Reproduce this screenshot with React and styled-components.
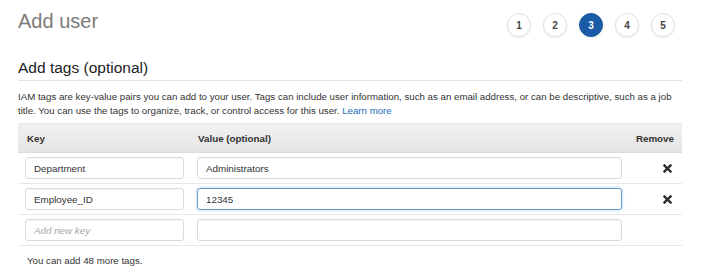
import React from 'react';
import styled, { createGlobalStyle } from 'styled-components';

const STEPS = [1, 2, 3, 4, 5];

const TAGS = [
  { key: 'Department', value: 'Administrators' },
  { key: 'Employee_ID', value: '12345', focused: true },
];

const GlobalStyle = createGlobalStyle`
  html, body {
    margin: 0;
    padding: 0;
    background: #fff;
  }
  body {
    font-family: 'Liberation Sans', Arial, sans-serif;
    color: #333;
  }
`;

const Page = styled.div`
  width: 664px;
  padding: 0 21px 0 18px;
`;

const TopBar = styled.div`
  display: flex;
  justify-content: space-between;
  align-items: flex-start;
  height: 46px;
`;

const Title = styled.h1`
  margin: 0;
  padding-top: 8px;
  font-size: 20px;
  line-height: 26px;
  font-weight: normal;
  color: #7b7b7b;
`;

const Steps = styled.div`
  display: flex;
  gap: 12px;
  margin: 13px 7px 0 0;
`;

const Step = styled.div`
  width: 24px;
  height: 24px;
  box-sizing: border-box;
  border-radius: 50%;
  display: flex;
  align-items: center;
  justify-content: center;
  font-size: 10px;
  font-weight: bold;
  color: ${(p) => (p.active ? '#fff' : '#444')};
  background: ${(p) => (p.active ? '#1a5aa6' : '#fff')};
  border: 1px solid ${(p) => (p.active ? '#1a5aa6' : '#e2e2e2')};
  box-shadow: 0 1px 2px rgba(0, 0, 0, 0.08);
`;

const SectionTitle = styled.h2`
  margin: 12px 0 0;
  padding-bottom: 2px;
  font-size: 15.5px;
  line-height: 20px;
  font-weight: normal;
  color: #222;
  border-bottom: 1px solid #e4e4e4;
`;

const Intro = styled.p`
  margin: 9px 0 0;
  font-size: 9.7px;
  line-height: 14px;
  color: #333;
`;

const Link = styled.a`
  color: #1a6bb8;
  text-decoration: none;
`;

const Table = styled.div`
  margin-top: 5px;
  display: grid;
  grid-template-columns: 179px 425px 60px;
`;

const HeadCell = styled.div`
  box-sizing: border-box;
  height: 30px;
  display: flex;
  align-items: center;
  justify-content: ${(p) => (p.right ? 'flex-end' : 'flex-start')};
  padding: ${(p) => (p.first ? '0 0 0 9px' : p.right ? '0 8px 0 0' : '0 0 0 1px')};
  font-size: 9.8px;
  font-weight: bold;
  color: #333;
  background: linear-gradient(#f1f1f1, #e5e5e5);
  border-top: 1px solid #e9e9e9;
  border-bottom: 1px solid #dcdcdc;
`;

const Cell = styled.div`
  height: 30px;
  display: flex;
  align-items: center;
  justify-content: ${(p) => (p.right ? 'flex-end' : 'flex-start')};
  padding: ${(p) => (p.first ? '0 0 0 7px' : p.right ? '0 10px 0 0' : '0')};
  border-bottom: 1px solid #e8e8e8;
`;

const Input = styled.input`
  box-sizing: border-box;
  width: ${(p) => p.w}px;
  height: 22px;
  padding: 0 8px;
  font-family: 'Liberation Sans', Arial, sans-serif;
  font-size: 9.8px;
  color: #333;
  background: #fff;
  border: 1px solid ${(p) => (p.focused ? '#6a9fd4' : '#dadada')};
  border-radius: 3px;
  box-shadow: ${(p) =>
    p.focused
      ? '0 0 3px rgba(60, 130, 200, 0.45)'
      : 'inset 0 1px 1px rgba(0, 0, 0, 0.04)'};
  outline: none;
  &::placeholder {
    color: #a8a8a8;
    font-style: italic;
  }
`;

const RemoveButton = styled.button`
  border: 0;
  padding: 0;
  background: none;
  display: flex;
  cursor: pointer;
`;

const Footer = styled.p`
  margin: 8px 0 0;
  padding-left: 9px;
  font-size: 9.7px;
  line-height: 14px;
  color: #333;
`;

function CloseIcon() {
  return (
    <svg width="9" height="9" viewBox="0 0 9 9">
      <path
        d="M1.5 1.5 L7.5 7.5 M7.5 1.5 L1.5 7.5"
        stroke="#2b2b2b"
        strokeWidth="2.4"
        strokeLinecap="square"
      />
    </svg>
  );
}

function App() {
  return (
    <Page>
      <GlobalStyle />
      <TopBar>
        <Title>Add user</Title>
        <Steps>
          {STEPS.map((n) => (
            <Step key={n} active={n === 3}>
              {n}
            </Step>
          ))}
        </Steps>
      </TopBar>
      <SectionTitle>Add tags (optional)</SectionTitle>
      <Intro>
        IAM tags are key-value pairs you can add to your user. Tags can include
        user information, such as an email address, or can be descriptive, such
        as a job title. You can use the tags to organize, track, or control
        access for this user. <Link href="#">Learn more</Link>
      </Intro>
      <Table>
        <HeadCell first>Key</HeadCell>
        <HeadCell>Value (optional)</HeadCell>
        <HeadCell right>Remove</HeadCell>
        {TAGS.map((t) => (
          <React.Fragment key={t.key}>
            <Cell first>
              <Input w={159} defaultValue={t.key} />
            </Cell>
            <Cell>
              <Input w={425} defaultValue={t.value} focused={t.focused} />
            </Cell>
            <Cell right>
              <RemoveButton aria-label="Remove">
                <CloseIcon />
              </RemoveButton>
            </Cell>
          </React.Fragment>
        ))}
        <Cell first>
          <Input w={159} placeholder="Add new key" />
        </Cell>
        <Cell>
          <Input w={425} />
        </Cell>
        <Cell right />
      </Table>
      <Footer>You can add 48 more tags.</Footer>
    </Page>
  );
}

export default App;
